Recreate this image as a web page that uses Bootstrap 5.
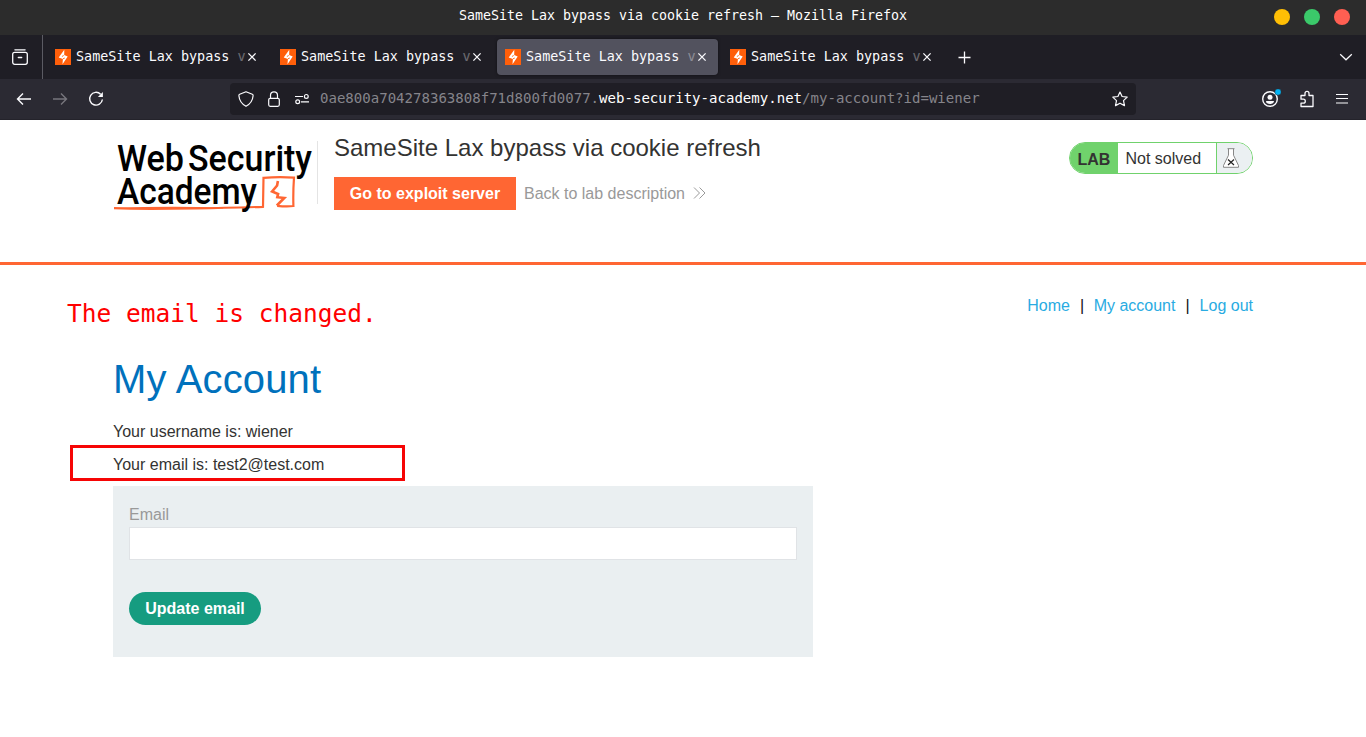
<!DOCTYPE html>
<html lang="en">
<head>
<meta charset="utf-8">
<title>SameSite Lax bypass via cookie refresh</title>
<link href="https://cdn.jsdelivr.net/npm/bootstrap@5.3.0/dist/css/bootstrap.min.css" rel="stylesheet">
<style>
body{font:16px/1.15 "Liberation Sans",Arial,sans-serif;color:#333332;background:#fff;overflow:hidden}
svg{display:block;flex:none}
.mono{font-family:"DejaVu Sans Mono",monospace;white-space:pre}
.titlebar{height:35px;background:#2c2c2c;color:#fff;font-size:13.29px;line-height:31px}
.dots{right:16px;top:9px;gap:14px}
.dots i{width:16px;height:16px;border-radius:50%}
.dots .min{background:#ffbf05}
.dots .max{background:#3bc96a}
.dots .close-dot{background:#ff5f52}
.tabstrip{height:44px;background:#1f1e25;color:#fbfbfe;padding-right:13px}
.all-tabs{width:43px;height:44px;border-right:1px solid #5b5b63;padding-left:12px}
.tab-row{margin-left:2px;padding-right:12px}
.browser-tab{width:221px;height:36px;margin:0 2px;padding:0 8px;border-radius:4px;font-size:13.42px}
.browser-tab.current{background:#52525e;box-shadow:0 0 3px rgba(0,0,0,.5)}
.tab-title{width:171px;margin-left:5px;line-height:20px}
.tab-title span{opacity:.35}
.toolbar{height:41px;background:#2b2a33;border-bottom:1px solid #24232b;color:#fbfbfe;padding:0 16px}
.urlbar{width:906px;height:32px;margin-left:126px;background:#1f1e25;border-radius:4px;padding:0 8px;font-size:14.06px}
.address{margin-left:10px;line-height:20px;padding-bottom:2px}
.dim{color:#86858b}
.tools{gap:20px;margin-left:auto}
.page-wrap{width:1140px;margin:0 auto}
.lab-header{height:145px;border-bottom:3px solid #ff6633}
.lab-rule{width:1px;height:63px;background:#e4e4e4;margin-top:21px}
.lab-title{font-size:24px;line-height:28px;margin:14px 0 15px}
.exploit{background:#ff6633;color:#fff;font-weight:700;height:33px;line-height:33px;width:182px;text-align:center}
.back{color:#999;margin-left:8px;line-height:33px}
.status{height:32px;width:184px;margin-top:22px;border:1px solid #70d26c;border-radius:16px;overflow:hidden}
.status .lab{background:#70d26c;width:48px;padding-left:7.500px;font-weight:700;line-height:33px}
.status .state{width:98px;padding-left:7.500px;line-height:31px}
.status .flask{background:#ebf0f2;border-left:1px solid #70d26c;padding:5px 0 0 5px;flex:1}
.site-nav{padding-top:32px;height:91px;color:#111}
.site-nav a{color:#29abe2;text-decoration:none}
.heading{font-size:40px;line-height:46px;letter-spacing:.15px;color:#0071bc;margin:0 0 20px}
.field-panel{width:700px;height:171px;background:#eaeff1;padding:19px 16px 0}
.field-panel label{color:#999;line-height:19px;display:block;margin-bottom:3px}
.field-panel .form-control{height:33px;border:1px solid #e0e3e6;border-radius:0;padding:0 6px}
.update{background:#169c80;color:#fff;font-weight:700;border:0;border-radius:17px;width:132px;height:33px;line-height:33px;padding:0;margin-top:32px}
.note{left:67px;top:299px;color:#f00;font-size:24.500px;line-height:29px}
.frame{left:-43px;top:-10px;width:335px;height:36px;border:3px solid #f60505}
</style>
</head>
<body>
<svg width="0" height="0" class="position-absolute"><defs>
<symbol id="bolt" viewBox="0 0 16 16"><path fill="#ff5f0a" d="M0 0h16v16H0z"/><path fill="#fff" d="M9.300 .8L9.200 6.100 12.700 7.500 7.500 15.200 7.900 10 3.700 8.600z"/><path stroke="#ff5f0a" stroke-width=".9" d="M8.700 6.500l-1.800 1M9.800 9l-1.800.8"/></symbol>
<symbol id="cross" viewBox="0 0 10 10"><path d="M1.400 1.400l7.200 7.200M8.600 1.400L1.400 8.600" stroke="#fbfbfe" stroke-width="1.300"/></symbol>
</defs></svg>
<header>
 <div class="titlebar mono position-relative text-center">SameSite Lax bypass via cookie refresh — Mozilla Firefox<div class="dots d-flex position-absolute"><i class="min"></i><i class="max"></i><i class="close-dot"></i></div></div>
 <div class="tabstrip d-flex align-items-center">
  <div class="all-tabs d-flex align-items-center"><svg width="16" height="16" viewBox="0 0 16 16" fill="none" stroke="#fbfbfe" stroke-width="1.300" stroke-linecap="round"><path d="M2.900.8h10.200"/><rect x=".7" y="3.300" width="14.600" height="12" rx="2"/><path d="M6.300 8.500h3.400"/></svg></div>
  <div class="tab-row d-flex">
   <div class="browser-tab d-flex align-items-center"><svg width="16" height="16"><use href="#bolt"/></svg><div class="tab-title mono">SameSite Lax bypass <span>v</span></div><svg width="10" height="10"><use href="#cross"/></svg></div>
   <div class="browser-tab d-flex align-items-center"><svg width="16" height="16"><use href="#bolt"/></svg><div class="tab-title mono">SameSite Lax bypass <span>v</span></div><svg width="10" height="10"><use href="#cross"/></svg></div>
   <div class="browser-tab current d-flex align-items-center"><svg width="16" height="16"><use href="#bolt"/></svg><div class="tab-title mono">SameSite Lax bypass <span>v</span></div><svg width="10" height="10"><use href="#cross"/></svg></div>
   <div class="browser-tab d-flex align-items-center"><svg width="16" height="16"><use href="#bolt"/></svg><div class="tab-title mono">SameSite Lax bypass <span>v</span></div><svg width="10" height="10"><use href="#cross"/></svg></div>
  </div>
  <svg width="14" height="14" viewBox="0 0 14 14" stroke="#fbfbfe" stroke-width="1.300"><path d="M7.500 1.500v12M1.500 7.500h12"/></svg>
  <svg class="ms-auto" width="14" height="8" viewBox="0 0 14 8" fill="none" stroke="#fbfbfe" stroke-width="1.200"><path d="M1.200 1.200L7 6.800l5.800-5.600"/></svg>
 </div>
 <div class="toolbar d-flex align-items-center">
  <svg width="16" height="16" viewBox="0 0 16 16" fill="none" stroke="#fbfbfe" stroke-width="1.400"><path d="M15 8H1.500M7 2.500L1.500 8 7 13.500"/></svg>
  <svg width="16" height="16" viewBox="0 0 16 16" fill="none" stroke="#77767d" stroke-width="1.400" style="margin-left:20px"><path d="M1 8h13.500M9 2.500L14.500 8 9 13.500"/></svg>
  <svg width="16" height="16" viewBox="0 0 16 16" fill="none" stroke="#fbfbfe" stroke-width="1.400" style="margin-left:20px"><path d="M12.600 3.200A6.400 6.400 0 1 0 14.400 8.500"/><path d="M14.900 1v5h-5z" fill="#fbfbfe" stroke="none"/></svg>
  <div class="urlbar d-flex align-items-center">
   <svg width="16" height="16" viewBox="0 0 16 16" fill="none" stroke="#fbfbfe" stroke-width="1.200" stroke-linejoin="round"><path d="M8 .8l6.300 2.500c.7.300.9.700.8 1.500C14.700 9.300 12.400 13 8 15.300 3.600 13 1.300 9.300.9 4.800.8 4 1 3.600 1.700 3.300z"/></svg>
   <svg width="12" height="16" viewBox="0 0 12 16" fill="none" stroke="#fbfbfe" stroke-width="1.200" style="margin-left:14px"><rect x=".7" y="7.300" width="10.600" height="8" rx="1.500"/><path d="M2.500 7V4.300a3.500 3.500 0 0 1 7 0V7"/></svg>
   <svg width="16" height="12" viewBox="0 0 16 12" fill="none" stroke="#fbfbfe" stroke-width="1.200" style="margin-left:14px"><path d="M1 3.500h8M7 8.800h8"/><circle cx="12.300" cy="3.400" r="1.900"/><circle cx="3.700" cy="8.700" r="1.900"/></svg>
   <div class="address mono dim">0ae800a704278363808f71d800fd0077.<span class="text-white">web-security-academy.net</span>/my-account?id=wiener</div>
   <svg class="ms-auto" width="16" height="16" viewBox="0 0 16 16" fill="none" stroke="#fbfbfe" stroke-width="1.200" stroke-linejoin="round"><path d="M8 1l2.100 4.500 5.100.6-3.700 3.500 1 5L8 12.200 3.500 14.600l1-5L.8 6.100l5.100-.6z"/></svg>
  </div>
  <div class="tools d-flex align-items-center" style="margin-right:1px">
   <svg width="19" height="20" viewBox="0 0 19 20" fill="none" stroke="#fbfbfe" stroke-width="1.400"><circle cx="8" cy="10" r="7.300"/><circle cx="8" cy="8.300" r="2.500" fill="#fbfbfe" stroke="none"/><path d="M4 12h8c0 2-1.800 3-4 3s-4-1-4-3z" fill="#fbfbfe" stroke="none"/><circle cx="16" cy="3" r="3.200" fill="#00b3f4" stroke="#2b2a33" stroke-width=".5"/></svg>
   <svg width="14" height="18" style="margin-left:-1px" viewBox="0 0 14 18" fill="none" stroke="#fbfbfe" stroke-width="1.300" stroke-linejoin="round"><path d="M1 8V5.500h4V3.400a2 2 0 0 1 4 0v2.100h4V16.500H1v-3.300h2.300a1.700 1.700 0 0 0 0-4H1z"/></svg>
   <svg width="14" height="14" viewBox="0 0 14 14" stroke="#fbfbfe" stroke-width="1.200" style="margin-left:1px"><path d="M1 2.500h12M1 6.500h12M1 11h12"/></svg>
  </div>
 </div>
</header>
<section class="lab-header">
 <div class="page-wrap d-flex">
  <svg width="204" height="100" viewBox="0 0 204 100" font-family="Roboto, sans-serif" font-size="37" font-weight="500" fill="#000">
   <path d="M1 88.200Q40 90 150 86.800L150.500 57.800Q166 56.500 181 57.600q-1 14-.6 28.400-7 .7-16.200-.2" fill="none" stroke="#ff6633" stroke-width="2.200"/>
   <path d="M1 88.500Q50 86.500 110 88" fill="none" stroke="#ff6633" stroke-width="1.200"/>
   <path d="M164.900 61l-.8 4.500-5 6 6 2.500-.8 3.200 7 .8-7.500 7.500" fill="none" stroke="#ff6633" stroke-width="2.600"/>
   <text x="4" y="50.500" textLength="67" lengthAdjust="spacingAndGlyphs">Web</text>
   <text x="75" y="50.500" textLength="124" lengthAdjust="spacingAndGlyphs">Security</text>
   <text x="4" y="83.500" textLength="140" lengthAdjust="spacingAndGlyphs">Academy</text>
  </svg>
  <div class="lab-rule"></div>
  <div class="ms-3">
   <h2 class="lab-title">SameSite Lax bypass via cookie refresh</h2>
   <div class="d-flex align-items-center"><div class="exploit">Go to exploit server</div><span class="back">Back to lab description</span>
   <svg width="13" height="12" viewBox="0 0 13 12" fill="none" stroke="#999" style="margin:-1px 0 0 8px"><path d="M1 .5L6.500 6 1 11.500M6.500.5L12 6 6.500 11.500"/></svg></div>
  </div>
  <div class="status d-flex ms-auto"><div class="lab">LAB</div><div class="state">Not solved</div><div class="flask"><svg width="18" height="20" viewBox="0 0 18 20" fill="#fff" stroke="#888"><path d="M5.500.7h7M6.500.7v6.500L1.500 17.500v1.800h15v-1.800L11.500 7.200V.7"/><path d="M6 11.500l6 5.500M12 11.500L6 17" stroke="#222" stroke-width="1.200"/></svg></div></div>
 </div>
</section>
<main class="page-wrap">
 <nav class="site-nav d-flex justify-content-end"><a href="#">Home</a><span style="margin:0 9.500px 0 10px">|</span><a href="#">My account</a><span style="margin:0 10px">|</span><a href="#">Log out</a></nav>
 <h1 class="heading">My Account</h1>
 <p style="margin:0 0 14px;line-height:19px">Your username is: wiener</p>
 <div class="position-relative" style="height:31px;line-height:19px">Your email is: test2@test.com<div class="frame position-absolute"></div></div>
 <div class="field-panel"><label>Email</label><input class="form-control" type="email"><button class="update btn">Update email</button></div>
</main>
<div class="note mono position-absolute">The email is changed.</div>
<script src="https://cdn.jsdelivr.net/npm/bootstrap@5.3.0/dist/js/bootstrap.bundle.min.js"></script>
</body>
</html>
